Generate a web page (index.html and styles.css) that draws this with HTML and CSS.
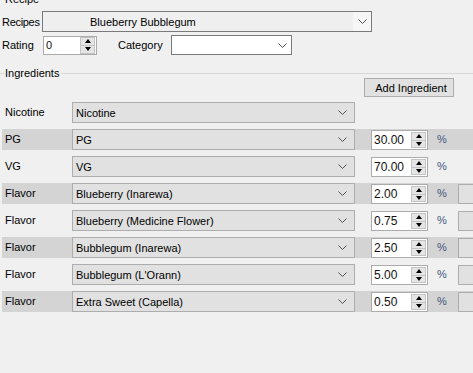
FILE: index.html
```html
<!DOCTYPE html>
<html lang="en">
<head>
  <meta charset="UTF-8">
  <title>Recipe</title>
  <link rel="stylesheet" href="styles.css">
</head>
<body>
  <div class="recipe">
    <div class="legend">Recipe</div>
    <div class="line1">
      <span class="lbl lbl-recipes">Recipes</span>
      <div class="combo combo-recipe">
        <span class="ctext">Blueberry Bubblegum</span>
        <span class="drop"><svg width="9" height="5"><polyline points="0.5,0.5 4.5,4.5 8.5,0.5" fill="none" stroke="#505050"/></svg></span>
      </div>
    </div>
    <div class="line2">
      <span class="lbl lbl-rating">Rating</span>
      <div class="num num-rating">
        <span class="val">0</span>
        <span class="spin"><b class="up"></b><b class="down"></b></span>
      </div>
      <span class="lbl lbl-cat">Category</span>
      <div class="combo combo-cat">
        <span class="ctext"></span>
        <span class="drop"><svg width="9" height="5"><polyline points="0.5,0.5 4.5,4.5 8.5,0.5" fill="none" stroke="#505050"/></svg></span>
      </div>
    </div>
  </div>

  <div class="group-head"><span>Ingredients</span></div>
  <div class="add-bar"><button class="btn">Add Ingredient</button></div>

  <div class="rows">
    <div class="row">
      <span class="rlbl">Nicotine</span>
      <div class="combo combo-row"><span class="ctext">Nicotine</span><span class="drop"><svg width="9" height="5"><polyline points="0.5,0.5 4.5,4.5 8.5,0.5" fill="none" stroke="#505050"/></svg></span></div>
    </div>
    <div class="row shade">
      <span class="rlbl">PG</span>
      <div class="combo combo-row"><span class="ctext">PG</span><span class="drop"><svg width="9" height="5"><polyline points="0.5,0.5 4.5,4.5 8.5,0.5" fill="none" stroke="#505050"/></svg></span></div>
      <div class="num num-row"><span class="val">30.00</span><span class="spin"><b class="up"></b><b class="down"></b></span></div>
      <span class="pct">%</span>
    </div>
    <div class="row">
      <span class="rlbl">VG</span>
      <div class="combo combo-row"><span class="ctext">VG</span><span class="drop"><svg width="9" height="5"><polyline points="0.5,0.5 4.5,4.5 8.5,0.5" fill="none" stroke="#505050"/></svg></span></div>
      <div class="num num-row"><span class="val">70.00</span><span class="spin"><b class="up"></b><b class="down"></b></span></div>
      <span class="pct">%</span>
    </div>
    <div class="row shade">
      <span class="rlbl">Flavor</span>
      <div class="combo combo-row"><span class="ctext">Blueberry (Inarewa)</span><span class="drop"><svg width="9" height="5"><polyline points="0.5,0.5 4.5,4.5 8.5,0.5" fill="none" stroke="#505050"/></svg></span></div>
      <div class="num num-row"><span class="val">2.00</span><span class="spin"><b class="up"></b><b class="down"></b></span></div>
      <span class="pct">%</span>
      <span class="side"></span>
    </div>
    <div class="row">
      <span class="rlbl">Flavor</span>
      <div class="combo combo-row"><span class="ctext">Blueberry (Medicine Flower)</span><span class="drop"><svg width="9" height="5"><polyline points="0.5,0.5 4.5,4.5 8.5,0.5" fill="none" stroke="#505050"/></svg></span></div>
      <div class="num num-row"><span class="val">0.75</span><span class="spin"><b class="up"></b><b class="down"></b></span></div>
      <span class="pct">%</span>
      <span class="side"></span>
    </div>
    <div class="row shade">
      <span class="rlbl">Flavor</span>
      <div class="combo combo-row"><span class="ctext">Bubblegum (Inarewa)</span><span class="drop"><svg width="9" height="5"><polyline points="0.5,0.5 4.5,4.5 8.5,0.5" fill="none" stroke="#505050"/></svg></span></div>
      <div class="num num-row"><span class="val">2.50</span><span class="spin"><b class="up"></b><b class="down"></b></span></div>
      <span class="pct">%</span>
      <span class="side"></span>
    </div>
    <div class="row">
      <span class="rlbl">Flavor</span>
      <div class="combo combo-row"><span class="ctext">Bubblegum (L'Orann)</span><span class="drop"><svg width="9" height="5"><polyline points="0.5,0.5 4.5,4.5 8.5,0.5" fill="none" stroke="#505050"/></svg></span></div>
      <div class="num num-row"><span class="val">5.00</span><span class="spin"><b class="up"></b><b class="down"></b></span></div>
      <span class="pct">%</span>
      <span class="side"></span>
    </div>
    <div class="row shade">
      <span class="rlbl">Flavor</span>
      <div class="combo combo-row"><span class="ctext">Extra Sweet (Capella)</span><span class="drop"><svg width="9" height="5"><polyline points="0.5,0.5 4.5,4.5 8.5,0.5" fill="none" stroke="#505050"/></svg></span></div>
      <div class="num num-row"><span class="val">0.50</span><span class="spin"><b class="up"></b><b class="down"></b></span></div>
      <span class="pct">%</span>
      <span class="side"></span>
    </div>
  </div>
</body>
</html>
```

FILE: styles.css
```css
html, body { margin: 0; padding: 0; }
body { font-family: "Liberation Sans", Arial, sans-serif; font-size: 11px; color: #000; background: #f0f0f0; width: 473px; height: 373px; overflow: hidden; }

.recipe { padding-left: 2px; }
.legend { margin-top: -8px; height: 14px; line-height: 14px; padding-left: 3px; }
.line1 { display: flex; align-items: center; height: 21px; margin-top: 5px; }
.line2 { display: flex; align-items: center; height: 20px; margin-top: 3px; }
.lbl { display: block; flex-shrink: 0; white-space: nowrap; }
.lbl-recipes { width: 40px; letter-spacing: -0.3px; }
.lbl-rating { width: 41px; }
.lbl-cat { width: 53px; margin-left: 21px; }

.combo { display: flex; align-items: center; flex-shrink: 0; box-sizing: border-box; border: 1px solid #7a7a7a; }
.combo .ctext { flex: 1; white-space: nowrap; overflow: hidden; }
.combo .drop { display: flex; align-items: center; justify-content: center; height: 100%; }
.combo-recipe { width: 330px; height: 21px; background: #efefef; }
.combo-recipe .ctext { padding-left: 47px; }
.combo-recipe .drop { width: 18px; background: #f6f6f6; }
.combo-cat { width: 121px; height: 20px; background: #fff; }
.combo-cat .drop { width: 17px; }

.num { display: flex; flex-shrink: 0; box-sizing: border-box; border: 1px solid #ababab; background: #fff; }
.num .val { flex: 1; padding-left: 2px; line-height: 17px; color: #111; }
.num-rating { width: 54px; height: 19px; }
.spin { display: flex; flex-direction: column; width: 15px; margin: 0 1px 0 0; }
.spin b { flex: 1; display: flex; align-items: center; justify-content: center; background: #e5e5e5; border: 1px solid #c4c4c4; }
.spin b.up { border-bottom: 0; }
.spin b.up::after { content: ""; border-left: 3px solid transparent; border-right: 3px solid transparent; border-bottom: 4px solid #000; }
.spin b.down::after { content: ""; border-left: 3px solid transparent; border-right: 3px solid transparent; border-top: 4px solid #000; }

.group-head { display: flex; align-items: center; height: 14px; margin-top: 11px; }
.group-head::before { content: ""; width: 4px; border-top: 1px solid #d8d8d8; }
.group-head::after { content: ""; flex: 1; border-top: 1px solid #d8d8d8; margin-left: 2px; }
.group-head span { padding-left: 1px; }

.add-bar { display: flex; justify-content: flex-end; margin-top: -2px; padding-right: 19px; }
.btn { width: 90px; height: 19px; padding: 0 0 0 4px; box-sizing: border-box; background: #e1e1e1; border: 1px solid #adadad; font: inherit; color: #000; }

.rows { margin-top: 5px; padding-left: 2px; }
.row { display: flex; align-items: flex-start; height: 21px; margin-bottom: 6px; }
.row.shade { background: #d4d4d4; }
.rlbl { width: 70px; flex-shrink: 0; padding-left: 3px; box-sizing: border-box; line-height: 20px; }
.combo-row { width: 283px; height: 21px; background: #e1e1e1; border-color: #adadad; }
.combo-row .ctext { padding-left: 3px; }
.combo-row .drop { width: 24px; }
.num-row { width: 57px; height: 20px; margin: 1px 0 0 16px; }
.num-row .val { line-height: 18px; font-size: 12px; }
.num-row .spin { margin: 1px 1px 1px 0; }
.pct { width: 21px; flex-shrink: 0; padding-left: 9px; line-height: 20px; color: #44557a; }
.side { width: 30px; height: 20px; flex-shrink: 0; margin-top: 1px; box-sizing: border-box; background: #e1e1e1; border: 1px solid #adadad; }
```
